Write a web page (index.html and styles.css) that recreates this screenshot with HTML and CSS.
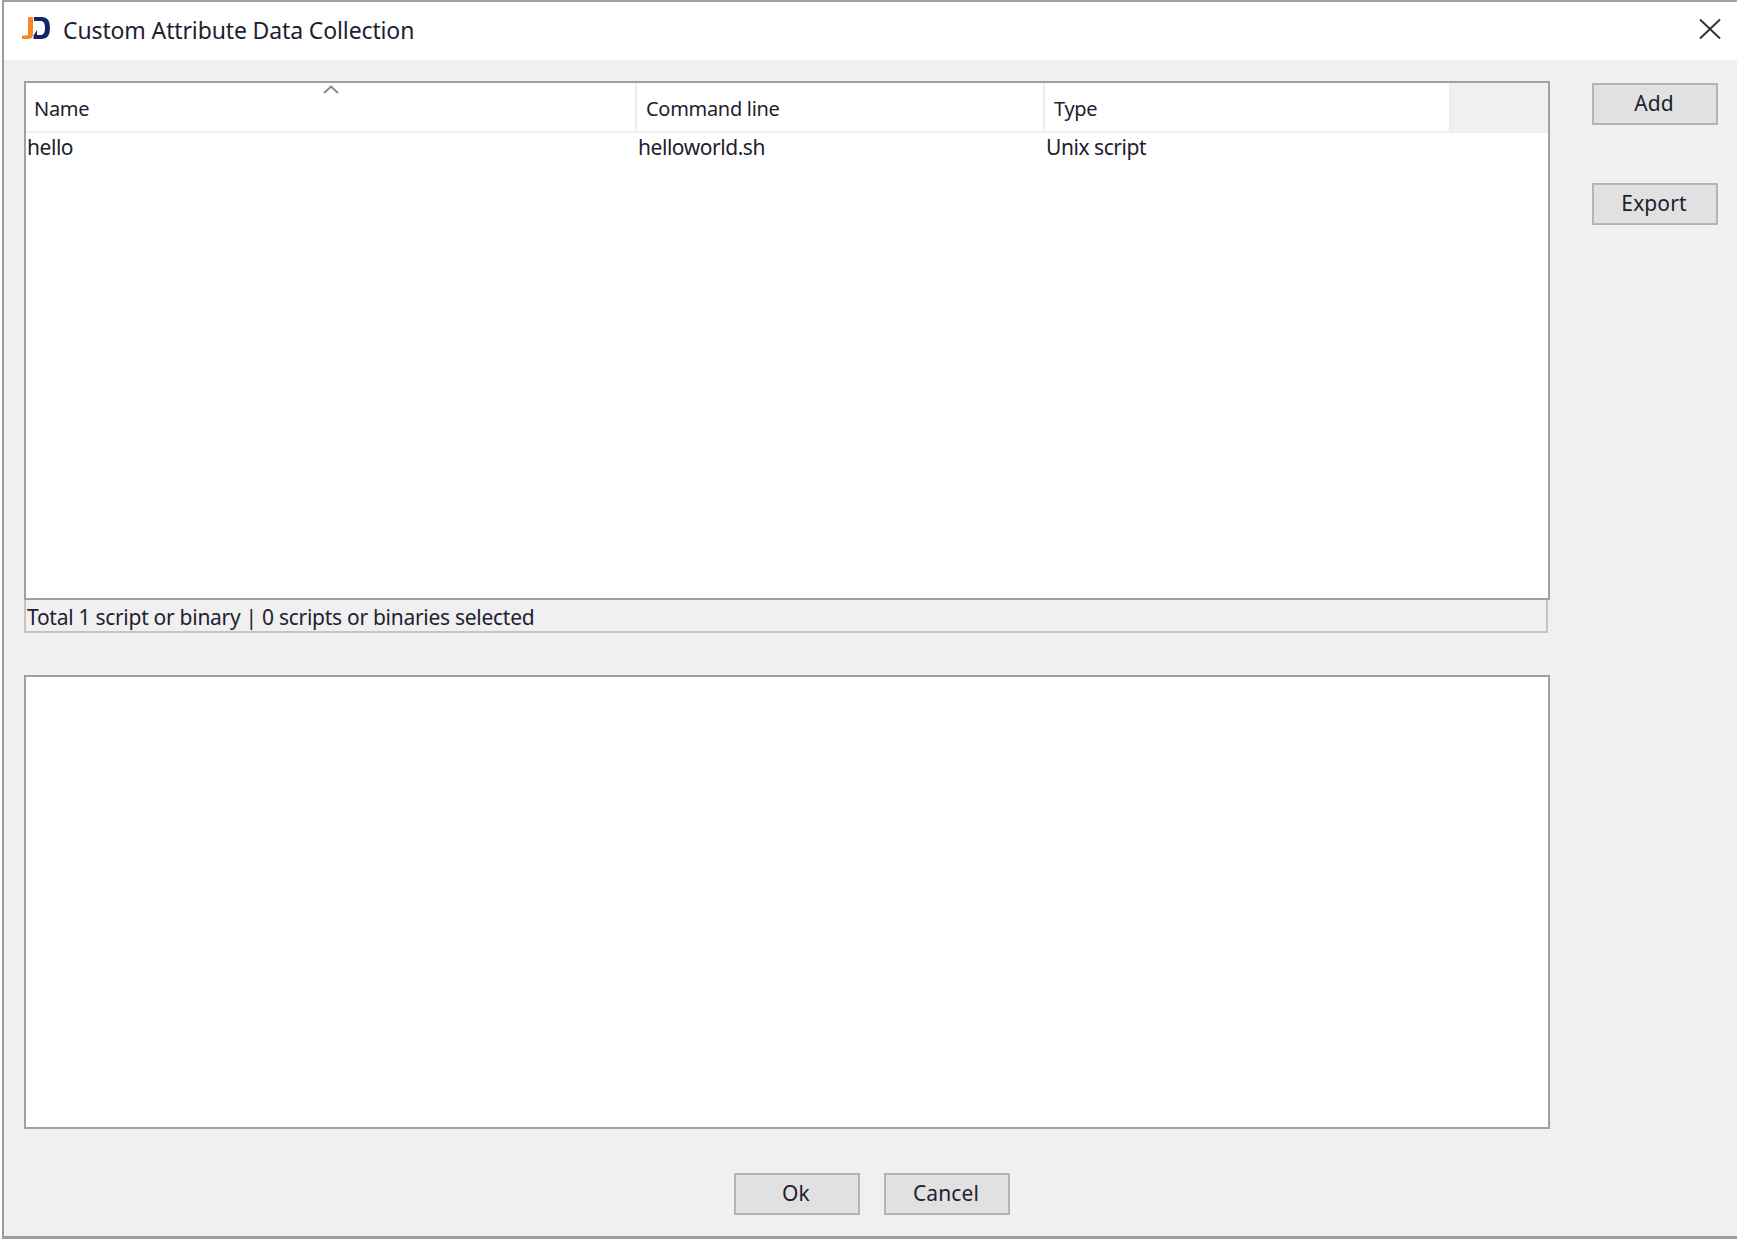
FILE: index.html
```html
<!DOCTYPE html>
<html lang="en">
<head>
<meta charset="utf-8">
<title>Custom Attribute Data Collection</title>
<link rel="stylesheet" href="styles.css">
</head>
<body>
<div class="window">
  <header class="titlebar">
    <svg class="logo" width="28" height="22" viewBox="0 0 28 22" aria-hidden="true">
      <path d="M6 0H11V17Q11 22 6 22H0V18.5H5Q6 18.5 6 17Z" fill="#f5881f"/>
      <path d="M12 0H20Q28 0 28 11Q28 22 20 22H11.5V18.5L15 13V18H19Q23 18 23 11Q23 4 19 4H12Z" fill="#14246b"/>
    </svg>
    <span class="title">Custom Attribute Data Collection</span>
    <svg class="close" width="22" height="20" viewBox="0 0 22 20" aria-hidden="true">
      <path d="M1 0.5L21 19.5M21 0.5L1 19.5" stroke="#333" stroke-width="2" fill="none"/>
    </svg>
  </header>
  <div class="content">
    <div class="top">
      <div class="main">
        <div class="table">
          <div class="thead">
            <div class="th th-first">Name
              <svg class="sort" width="16" height="9" viewBox="0 0 16 9" aria-hidden="true"><path d="M1 8L8 1.5L15 8" stroke="#888" stroke-width="2" fill="none"/></svg>
            </div>
            <div class="th">Command line</div>
            <div class="th">Type</div>
            <div class="th-fill"></div>
          </div>
          <div class="row">
            <div class="td">hello</div>
            <div class="td">helloworld.sh</div>
            <div class="td">Unix script</div>
          </div>
        </div>
        <div class="status">Total 1 script or binary | 0 scripts or binaries selected</div>
        <div class="output"></div>
      </div>
      <aside class="side">
        <button class="btn" type="button">Add</button>
        <button class="btn" type="button">Export</button>
      </aside>
    </div>
    <footer class="footer">
      <button class="btn" type="button">Ok</button>
      <button class="btn" type="button">Cancel</button>
    </footer>
  </div>
</div>
</body>
</html>
```

FILE: styles.css
```css
* { box-sizing: border-box; }
html, body { margin: 0; height: 100%; background: #fff; overflow: hidden; }
body {
  font-family: "Noto Sans", "Open Sans", sans-serif;
  font-size: 21px;
  letter-spacing: -0.28px;
  color: #1f2130;
}

.window {
  margin-left: 2px;
  height: 1239px;
  border-left: 2px solid #9c9c9c;
  border-top: 2px solid #a2a2a2;
  border-bottom: 3px solid #9c9c9c;
  display: flex;
  flex-direction: column;
  background: #f0f0f0;
}

.titlebar {
  height: 58px;
  flex: none;
  background: #fff;
  display: flex;
  align-items: center;
  padding-left: 18px;
  padding-right: 16px;
}
.logo { flex: none; margin-bottom: 6px; }
.title {
  margin-left: 13px;
  margin-bottom: 2px;
  font-size: 23px;
  letter-spacing: -0.13px;
  flex: 1;
}
.close { flex: none; margin-bottom: 4px; }

.content { flex: 1; display: flex; flex-direction: column; }
.top { display: flex; padding: 21px 0 0 20px; }
.main { width: 1526px; flex: none; }
.side { margin-left: 42px; padding-top: 2px; display: flex; flex-direction: column; gap: 58px; }

.table {
  height: 519px;
  background: #fff;
  border: 2px solid #9ca1a6;
}
.thead, .row { display: grid; grid-template-columns: 611px 408px 406px 1fr; }
.thead { height: 50px; border-bottom: 2px solid #f0f0f0; }
.th {
  position: relative;
  border-right: 2px solid #ececec;
  padding: 11px 0 0 9px;
  font-size: 20px;
  letter-spacing: -0.3px;
  line-height: 30px;
}
.th-first { padding-left: 8px; }
.th-fill { background: #f0f0f0; }
.sort { position: absolute; left: 297px; top: 2px; }
.td { padding-left: 1px; letter-spacing: -0.45px; line-height: 29px; }

.status {
  height: 33px;
  width: 1524px;
  background: #f0f0f0;
  border: 2px solid #c4c4c4;
  border-top: 0;
  padding: 2px 0 0 1px;
  line-height: 30px;
}
.output {
  margin-top: 42px;
  height: 454px;
  background: #fff;
  border: 2px solid #9ca1a6;
}

.btn {
  width: 126px;
  height: 42px;
  padding: 0 2px 2px 0;
  background: #e1e1e1;
  border: 2px solid #b4b4b4;
  font: inherit;
  letter-spacing: 0.1px;
  color: inherit;
}
.footer { display: flex; justify-content: center; gap: 24px; margin-top: 44px; padding-left: 3px; }
```
